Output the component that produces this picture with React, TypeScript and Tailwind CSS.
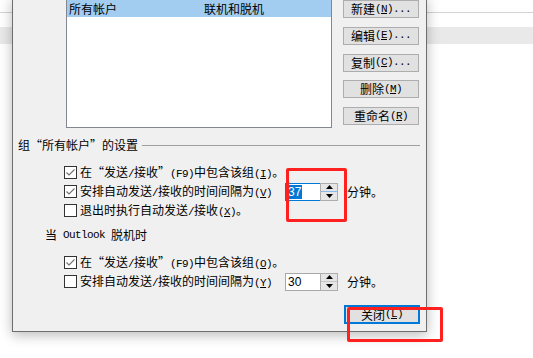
import React from "react";

// splits a label into CJK / ascii runs, "&X" marks the underlined access key
const Label: React.FC<{ s: string }> = ({ s }) => {
  const runs: { t: string; a: boolean; u: boolean }[] = [];
  for (let i = 0; i < s.length; i++) {
    let ch = s[i];
    let u = false;
    if (ch === "&" && i + 1 < s.length) {
      i++;
      ch = s[i];
      u = true;
    }
    const a = ch.charCodeAt(0) < 128;
    const last = runs[runs.length - 1];
    if (last && last.a === a && !u && !last.u) last.t += ch;
    else runs.push({ t: ch, a, u });
  }
  return (
    <>
      {runs.map((r, i) =>
        r.a ? (
          <span
            key={i}
            className={`font-['Liberation_Mono',monospace] text-[11px] tracking-[-0.6px] whitespace-pre ${r.u ? "underline" : ""}`}
          >
            {r.t}
          </span>
        ) : (
          <span key={i}>{r.t}</span>
        )
      )}
    </>
  );
};

const CheckBox: React.FC<{ checked?: boolean }> = ({ checked }) => (
  <svg width="13" height="13" viewBox="0 0 13 13" className="shrink-0">
    <rect x="0.5" y="0.5" width="12" height="12" fill="#fff" stroke="#333" />
    {checked && (
      <path d="M2.5 6.5 L5 9 L10.5 3.5" fill="none" stroke="#6f6f6f" strokeWidth="1.1" />
    )}
  </svg>
);

const Spin: React.FC<{ value: string; focused?: boolean }> = ({ value, focused }) => (
  <div className="flex h-[18px] w-[53px] shrink-0">
    <div
      className={`flex h-full w-[35px] items-center border border-r-0 bg-white pl-[1px] ${
        focused ? "border-[#0078d7]" : "border-[#a8a8a8]"
      }`}
    >
      <span
        className={`px-[1px] font-['Liberation_Sans',sans-serif] text-[12px] leading-[14px] ${
          focused ? "bg-[#0078d7] text-white" : "text-black"
        }`}
      >
        {value}
      </span>
    </div>
    <div className="flex h-full w-[18px] flex-col border border-[#adadad] bg-[#e6e6e6]">
      <div
        className={`flex flex-1 items-center justify-center border-b ${
          focused ? "border-[#86bbeb]" : "border-[#c6c6c6]"
        }`}
      >
        <svg width="7" height="4" viewBox="0 0 7 4">
          <path d="M3.5 0 L7 4 L0 4 Z" fill="#000" />
        </svg>
      </div>
      <div className="flex flex-1 items-center justify-center">
        <svg width="7" height="4" viewBox="0 0 7 4">
          <path d="M0 0 L7 0 L3.5 4 Z" fill="#000" />
        </svg>
      </div>
    </div>
  </div>
);

const Btn: React.FC<{ s: string; primary?: boolean }> = ({ s, primary }) => (
  <div
    className={`flex w-[76px] items-center justify-center bg-[#e1e1e1] ${
      primary ? "h-[19px] border-2 border-[#0078d7]" : "h-[18px] border border-[#adadad]"
    }`}
  >
    <Label s={s} />
  </div>
);

const Row: React.FC<{ s: string; checked?: boolean; spin?: string; focused?: boolean }> = ({
  s,
  checked,
  spin,
  focused,
}) => (
  <div className="flex h-[19px] items-center pl-[51px]">
    <div className="flex w-[221px] shrink-0 items-center">
      <CheckBox checked={checked} />
      <span className="ml-[3px] whitespace-nowrap">
        <Label s={s} />
      </span>
    </div>
    {spin && (
      <>
        <Spin value={spin} focused={focused} />
        <span className="ml-[9px]">分钟。</span>
      </>
    )}
  </div>
);

export default function App() {
  return (
    <div className="relative h-[358px] w-[533px] overflow-hidden bg-white font-['Noto_Sans_CJK_SC',sans-serif] text-[12px] leading-none text-black">
      {/* window behind the dialog */}
      <div className="pt-[12px]">
        <div className="h-px bg-[#d3d3d3]" />
        <div className="mt-[14px] h-[17px] bg-[#e9e9e9]" />
      </div>

      <div className="absolute left-[12px] top-[-3px] flex h-[335px] w-[415px] flex-col border border-[#6e6e6e] bg-[#f0f0f0] shadow-[0_3px_12px_rgba(0,0,0,0.28)]">
        <div className="flex">
          <div className="ml-[53px] mt-[1px] h-[129px] w-[266px] border border-[#828790] bg-white">
            <div className="flex h-[17px] items-center bg-[#a2cdf0] pl-[2px]">
              <span className="w-[135px]">所有帐户</span>
              <span>联机和脱机</span>
            </div>
          </div>
          <div className="ml-[11px] mt-[2px] flex flex-col gap-[8.75px]">
            <Btn s="新建(&N)..." />
            <Btn s="编辑(&E)..." />
            <Btn s="复制(&C)..." />
            <Btn s="删除(&M)" />
            <Btn s="重命名(&R)" />
          </div>
        </div>

        <div className="mt-[9px] flex h-[16px] items-center pl-[5px] pr-[6px]">
          <span className="whitespace-nowrap">组“所有帐户”的设置</span>
          <div className="ml-[4px] h-px flex-1 bg-[#a0a0a0]" />
        </div>

        <div className="mt-[10px]">
          <Row s="在“发送/接收”(F9)中包含该组(&I)。" checked />
          <Row s="安排自动发送/接收的时间间隔为(&V)" checked spin="37" focused />
          <Row s="退出时执行自动发送/接收(&X)。" />
        </div>

        <div className="mt-[7px] flex h-[16px] items-center pl-[32px]">
          <Label s="当 Outlook 脱机时" />
        </div>

        <div className="mt-[10px]">
          <Row s="在“发送/接收”(F9)中包含该组(&O)。" checked />
          <Row s="安排自动发送/接收的时间间隔为(&Y)" spin="30" />
        </div>

        <div className="mt-[14px] flex justify-end pr-[6px]">
          <Btn s="关闭(&L)" primary />
        </div>
      </div>

      {/* red annotation boxes */}
      <div className="absolute left-[286px] top-[168px] h-[54px] w-[61px] rounded-[2px] border-[3px] border-[#ff2020]" />
      <div className="absolute left-[347px] top-[307px] h-[35px] w-[96px] rounded-[2px] border-[3px] border-[#ff2020]" />
    </div>
  );
}
